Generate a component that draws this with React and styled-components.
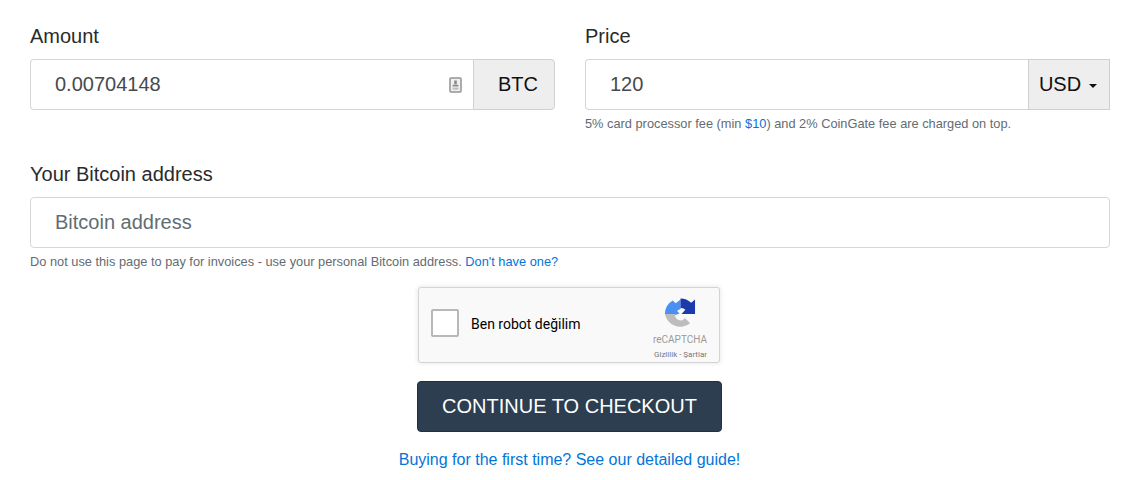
import React from "react";
import styled, { createGlobalStyle } from "styled-components";

const Global = createGlobalStyle`
  html, body { margin: 0; padding: 0; background: #fff; }
  body { font-family: "Liberation Sans", Arial, sans-serif; color: #292b2c; }
  * { box-sizing: border-box; }
`;
const Page = styled.form`
  width: 1144px; height: 480px; overflow: hidden; padding: 24px 34px 0 30px;
  display: flex; flex-direction: column;
`;
const Row = styled.div`display: grid; grid-template-columns: 525px 525px; column-gap: 30px;`;
const Field = styled.div`display: flex; flex-direction: column;`;
const Label = styled.label`font-size: 20px; line-height: 24px; margin-bottom: 11px; color: #292b2c;`;
const Group = styled.div`display: flex; height: 51px;`;
const Input = styled.div`
  flex: 1; position: relative; display: flex; align-items: center; padding-left: 24px;
  border: 1px solid #d6d6d6; background: #fff;
  border-radius: ${p => p.$full ? "4px" : "4px 0 0 4px"};
  border-right: ${p => p.$full ? "1px solid #d6d6d6" : "0"};
  font-size: 20px; color: ${p => p.$ph ? "#636c72" : "#464a4c"};
`;
const Addon = styled.div`
  width: 82px; display: flex; align-items: center; justify-content: center; gap: 8px;
  background: #eee; border: 1px solid #d0d0d0; color: #111; font-size: 20px;
  padding: ${p => p.$round ? "0 0 0 8px" : "0 2px 0 0"};
  border-radius: ${p => p.$round ? "0 4px 4px 0" : "0"};
`;
const Caret = styled.span`
  width: 0; height: 0; border-left: 4px solid transparent; border-right: 4px solid transparent;
  border-top: 4px solid #111; margin-top: 2px;
`;
const KeyIcon = styled.svg`position: absolute; right: 11px; top: 17px;`;
const Help = styled.small`display: block; font-size: 12.8px; line-height: 14px; margin-top: 7px; color: #636c72;`;
const A = styled.a`color: #0275d8; text-decoration: none;`;
const Block = styled.div`margin-top: 31px; width: 1080px;`;
const Center = styled.div`width: 1079px; display: flex; flex-direction: column; align-items: center;`;
const Captcha = styled.div`
  width: 302px; height: 76px; margin: 18px 1px 0 0; background: #f9f9f9; border: 1px solid #d3d3d3; border-radius: 3px;
  box-shadow: 0 0 4px 1px rgba(0,0,0,.08); display: flex; align-items: center; padding: 0 12px 4px; position: relative;
`;
const Box = styled.div`width: 28px; height: 28px; background: #fff; border: 2px solid #b8b8b8; border-radius: 2px;`;
const CapText = styled.span`font-family: Roboto, sans-serif; font-size: 14px; color: #000; margin: 2px 0 0 12px;`;
const Brand = styled.div`
  position: absolute; right: 12px; top: 10px; display: flex; flex-direction: column; align-items: flex-end;
  font-family: Roboto, sans-serif;
`;
const Logo = styled.svg`margin-right: 11px;`;
const BrandName = styled.span`font-size: 10px; line-height: 12px; margin-top: 4px; color: #9b9b9b;`;
const BrandLinks = styled.span`font-size: 8px; line-height: 10px; margin-top: 4px; white-space: nowrap; color: #777;`;
const Button = styled.button`
  margin-top: 18px; width: 305px; height: 51px; background: #2c3e50; color: #fff; font: 20px "Liberation Sans", Arial, sans-serif;
  border: 1px solid #22303e; border-radius: 4px; padding: 0;
`;
const Guide = styled(A)`font-size: 16px; line-height: 20px; margin-top: 18px;`;

export default function App() {
  return (
    <Page>
      <Global />
      <Row>
        <Field>
          <Label>Amount</Label>
          <Group>
            <Input>0.00704148
              <KeyIcon width="13" height="17" viewBox="0 0 13 17">
                <rect x="1" y="1" width="11" height="14" rx="1" fill="#f0f0f0" stroke="#929292" strokeWidth="1.5" />
                <path d="M5.2 3.6h2.6v3.6H5.2zM3.6 7.8h5.8v1.6H3.6z" fill="#8a8a8a" />
                <path d="M3.6 10.6h5.8v2H3.6z" fill="#bdbdbd" />
              </KeyIcon>
            </Input>
            <Addon $round>BTC</Addon>
          </Group>
        </Field>
        <Field>
          <Label>Price</Label>
          <Group>
            <Input>120</Input>
            <Addon>USD <Caret /></Addon>
          </Group>
          <Help>5% card processor fee (min <A href="#">$10</A>) and 2% CoinGate fee are charged on top.</Help>
        </Field>
      </Row>
      <Block>
        <Field>
          <Label>Your Bitcoin address</Label>
          <Group><Input $full $ph>Bitcoin address</Input></Group>
          <Help>Do not use this page to pay for invoices - use your personal Bitcoin address. <A href="#">Don't have one?</A></Help>
        </Field>
      </Block>
      <Center>
        <Captcha>
          <Box />
          <CapText>Ben robot değilim</CapText>
          <Brand>
            <Logo width="31" height="32" viewBox="0 0 32 32">
              <path d="M0 16A16 16 0 0 1 8 2L11 5 16 1V11A5 5 0 0 0 12.5 13L15 15.5 10.5 17H0Z" fill="#4a90f2" />
              <path d="M16 0A16 16 0 0 1 27 4.5L31 1V16H17L21 11.5A6 6 0 0 0 16 10Z" fill="#1c3aa9" />
              <path d="M0 16H10.5A5.5 5.5 0 0 0 20.5 20L26 25.5A16 16 0 0 1 0 16Z" fill="#bdbdbd" />
            </Logo>
            <BrandName>reCAPTCHA</BrandName>
            <BrandLinks>Gizlilik - Şartlar</BrandLinks>
          </Brand>
        </Captcha>
        <Button type="button">CONTINUE TO CHECKOUT</Button>
        <Guide href="#">Buying for the first time? See our detailed guide!</Guide>
      </Center>
    </Page>
  );
}
